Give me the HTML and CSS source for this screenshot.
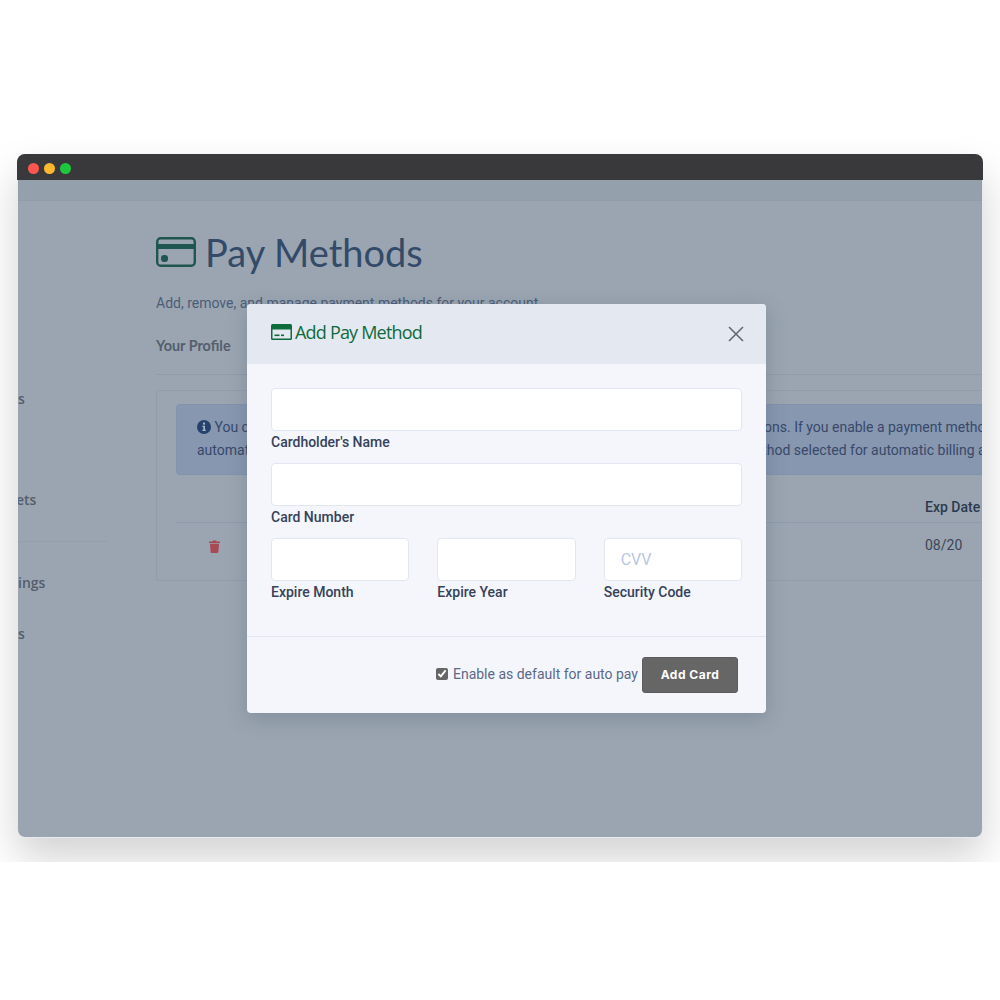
FILE: index.html
```html
<!DOCTYPE html>
<html lang="en">
<head>
   <meta charset="UTF-8">
   <meta name="viewport" content="width=device-width, initial-scale=1.0">
   <title>Add Pay Method</title>
   <link rel="stylesheet" href="styles.css">
</head>
<body>
   <div class="stage">
       <div class="window">
           <div class="titlebar">
               <span class="light light-red"></span>
               <span class="light light-yellow"></span>
               <span class="light light-green"></span>
           </div>
           <div class="app">
               <div class="topnav"></div>
               <div class="app-body">
                   <div class="sidebar">
                       <div class="side-item side-a">s</div>
                       <div class="side-item side-b">ets</div>
                       <div class="side-rule"></div>
                       <div class="side-item side-c">ings</div>
                       <div class="side-item side-d">s</div>
                   </div>
                   <div class="content">
                       <div class="page-title">
                           <svg class="page-icon" width="40" height="30" viewBox="0 0 40 30">
                               <rect x="1.2" y="1.2" width="37.6" height="27.6" rx="3.5" fill="none" stroke="#1f5750" stroke-width="2.4"/>
                               <rect x="1" y="7" width="38" height="5" fill="#1f5750"/>
                               <rect x="5" y="18" width="7" height="7" rx="3" fill="#1f5750"/>
                           </svg>
                           <h1>Pay Methods</h1>
                       </div>
                       <p class="page-desc">Add, remove, and manage payment methods for your account</p>
                       <div class="tabs">Your Profile</div>
                       <div class="panel">
                           <div class="alert">
                               <div class="alert-line">
                                   <svg class="info-icon" width="14" height="14" viewBox="0 0 14 14">
                                       <circle cx="7" cy="7" r="7" fill="#24426b"/>
                                       <rect x="6" y="2.6" width="2" height="2" fill="#a9b5c8"/>
                                       <path d="M5.4 5.8H8v4h.8v1.2H5.4V9.8h.9V7h-.9z" fill="#a9b5c8"/>
                                   </svg>
                                   You can add as many cards as you like to your account and see all of your saved pay options. If you enable a payment method
                               </div>
                               <div class="alert-line">automatically billed using the card you have set on your account today, and with the pay method selected for automatic billing at</div>
                           </div>
                           <div class="table-head">
                               <span class="exp-col">Exp Date</span>
                           </div>
                           <div class="table-row">
                               <svg class="trash" width="11" height="13" viewBox="0 0 11 13">
                                   <path d="M0 1.5h3.3L3.8 .4h3.4l.5 1.1H11v1.4H0zM1 3.8h9l-.6 8.3c0 .5-.4.9-.9.9h-6c-.5 0-.9-.4-.9-.9z" fill="#a84a55"/>
                               </svg>
                               <span class="exp-col exp-value">08/20</span>
                           </div>
                       </div>
                   </div>
               </div>
           </div>

           <div class="modal">
               <div class="modal-head">
                   <div class="modal-title">
                       <svg width="21" height="16" viewBox="0 0 21 16">
                           <rect x="0" y="0" width="21" height="16" rx="1.5" fill="#0d6b3c"/>
                           <rect x="1.5" y="5.5" width="18" height="9" fill="#e4e8f1"/>
                           <rect x="3.5" y="10.5" width="5" height="1.6" fill="#0d6b3c"/>
                           <rect x="10" y="10.5" width="3" height="1.6" fill="#0d6b3c"/>
                       </svg>
                       Add Pay Method
                   </div>
                   <svg class="close" width="16" height="16" viewBox="0 0 16 16">
                       <path d="M1 1l14 14M15 1L1 15" stroke="#5f6670" stroke-width="1.5" fill="none"/>
                   </svg>
               </div>
               <div class="modal-body">
                   <div class="field">
                       <input class="input" type="text">
                       <label>Cardholder's Name</label>
                   </div>
                   <div class="field">
                       <input class="input" type="text">
                       <label>Card Number</label>
                   </div>
                   <div class="field-row">
                       <div class="field">
                           <input class="input" type="text">
                           <label>Expire Month</label>
                       </div>
                       <div class="field">
                           <input class="input" type="text">
                           <label>Expire Year</label>
                       </div>
                       <div class="field">
                           <input class="input" type="text" placeholder="CVV">
                           <label>Security Code</label>
                       </div>
                   </div>
               </div>
               <div class="modal-foot">
                   <label class="auto-pay"><input type="checkbox" checked> Enable as default for auto pay</label>
                   <button class="add-button">Add Card</button>
               </div>
           </div>
       </div>
   </div>
</body>
</html>
```
FILE: styles.css
```css
body {
    margin: 0;
    background-color: #fff;
    font-family: Roboto, sans-serif;
}
.stage {
    height: 862px;
    padding: 154px 17px 0;
    box-sizing: border-box;
    overflow: hidden;
    background-color: #fff;
}
.window {
    position: relative;
    height: 684px;
    border-radius: 8px;
    overflow: hidden;
    display: flex;
    flex-direction: column;
    box-shadow: 0 20px 40px rgba(0, 0, 0, 0.18);
}
.titlebar {
    height: 26px;
    flex: none;
    background-color: #39393b;
    display: flex;
    align-items: center;
    gap: 5px;
    padding: 2px 0 0 11px;
    box-sizing: border-box;
}
.light {
    width: 11px;
    height: 11px;
    border-radius: 50%;
}
.light-red {
    background-color: #fd5650;
}
.light-yellow {
    background-color: #fdb82c;
}
.light-green {
    background-color: #1fc73f;
}
.app {
    flex: 1;
    background-color: #9aa5b1;
    border: 1px solid #e6e9ee;
    border-top: none;
    border-radius: 0 0 8px 8px;
    overflow: hidden;
    display: flex;
    flex-direction: column;
    min-height: 0;
}
.topnav {
    height: 20px;
    flex: none;
    background-color: #94a0ac;
    border-bottom: 1px solid #909caa;
}
.app-body {
    flex: 1;
    display: flex;
    min-height: 0;
}
.sidebar {
    width: 138px;
    flex: none;
    color: #545e6c;
    font-size: 14px;
    font-family: "Open Sans", sans-serif;
    font-weight: 600;
}
.side-item {
    line-height: 20px;
}
.side-a {
    margin-top: 188px;
}
.side-b {
    margin-top: 81px;
    margin-left: -2px;
}
.side-rule {
    width: 89px;
    height: 1px;
    margin-top: 31px;
    background-color: #929eab;
}
.side-c {
    margin-top: 31px;
}
.side-d {
    margin-top: 31px;
}
.content {
    flex: none;
    width: 900px;
    padding-top: 28px;
}
.page-title {
    display: flex;
    align-items: center;
    gap: 9px;
    height: 46px;
}
.page-title h1 {
    margin: 0;
    color: #334a68;
    font-family: Lato, sans-serif;
    font-weight: 400;
    font-size: 38px;
}
.page-desc {
    margin: 18px 0 0;
    color: #4c5c78;
    font-size: 14px;
    line-height: 20px;
}
.tabs {
    margin-top: 23px;
    height: 38px;
    color: #545e6c;
    font-family: Lato, sans-serif;
    font-size: 14.4px;
    font-weight: 700;
    line-height: 20px;
    border-bottom: 1px solid #8f9ba9;
}
.panel {
    margin-top: 15px;
    height: 191px;
    padding: 13px 20px 0 19px;
    border: 1px solid #919dac;
    box-sizing: border-box;
}
.alert {
    height: 71px;
    padding: 11px 20px;
    box-sizing: border-box;
    background-color: #8797b0;
    border: 1px solid #8293b0;
    border-radius: 4px;
    color: #37496a;
    font-size: 14px;
    line-height: 23px;
    white-space: nowrap;
    overflow: hidden;
}
.info-icon {
    vertical-align: -2px;
}
.table-head {
    height: 48px;
    display: flex;
    align-items: flex-end;
    padding-bottom: 7px;
    box-sizing: border-box;
    border-bottom: 1px solid #8e9bad;
    color: #2e3a4e;
    font-size: 14px;
    font-weight: 500;
}
.table-row {
    height: 44px;
    display: flex;
    align-items: center;
    color: #3b4658;
    font-size: 14px;
}
.trash {
    margin: 2px 0 0 33px;
}
.exp-col {
    margin-left: 749px;
}
.exp-value {
    margin-left: 705px;
}
.modal {
    position: absolute;
    left: 230px;
    top: 150px;
    width: 519px;
    height: 409px;
    border-radius: 4px;
    overflow: hidden;
    background-color: #f4f6fb;
    box-shadow: 0 5px 20px rgba(60, 70, 90, 0.25);
    display: flex;
    flex-direction: column;
}
.modal-head {
    height: 60px;
    flex: none;
    background-color: #e4e8f1;
    display: flex;
    align-items: center;
    justify-content: space-between;
    padding: 0 22px 0 24px;
}
.modal-title {
    display: flex;
    align-items: center;
    gap: 3px;
    margin-bottom: 5px;
    color: #0d6b3c;
    font-family: "Open Sans", sans-serif;
    font-size: 18px;
    letter-spacing: -0.8px;
}
.modal-body {
    flex: 1;
    padding: 24px 24px 0;
    display: flex;
    flex-direction: column;
    gap: 12px;
}
.field {
    display: flex;
    flex-direction: column;
    flex: 1;
}
.modal-body > .field {
    flex: none;
}
.field label {
    margin-top: 2px;
    color: #36425a;
    font-size: 14px;
    font-weight: 500;
    line-height: 18px;
}
.field-row {
    display: flex;
    gap: 28px;
}
.input {
    height: 43px;
    width: 100%;
    box-sizing: border-box;
    padding: 0 16px;
    background-color: #fff;
    border: 1px solid #e2e6f0;
    border-radius: 4px;
    font-family: Roboto, sans-serif;
    font-size: 16px;
}
.input::placeholder {
    color: #b8c6e2;
}
.modal-foot {
    height: 77px;
    flex: none;
    border-top: 1px solid #e2e6f0;
    display: flex;
    align-items: center;
    justify-content: flex-end;
    gap: 4px;
    padding: 0 28px 1px 0;
    box-sizing: border-box;
}
.auto-pay {
    display: flex;
    align-items: center;
    gap: 5px;
    margin-bottom: 1px;
    color: #5a6a88;
    font-size: 14px;
}
.auto-pay input {
    width: 12px;
    height: 12px;
    margin: 0;
    accent-color: #666;
}
.add-button {
    width: 96px;
    height: 36px;
    background-color: #666;
    color: #fff;
    border: 1px solid #5c5c5c;
    border-radius: 3px;
    font-family: Inter, sans-serif;
    font-size: 12px;
    font-weight: 700;
    letter-spacing: 0.5px;
}
```
